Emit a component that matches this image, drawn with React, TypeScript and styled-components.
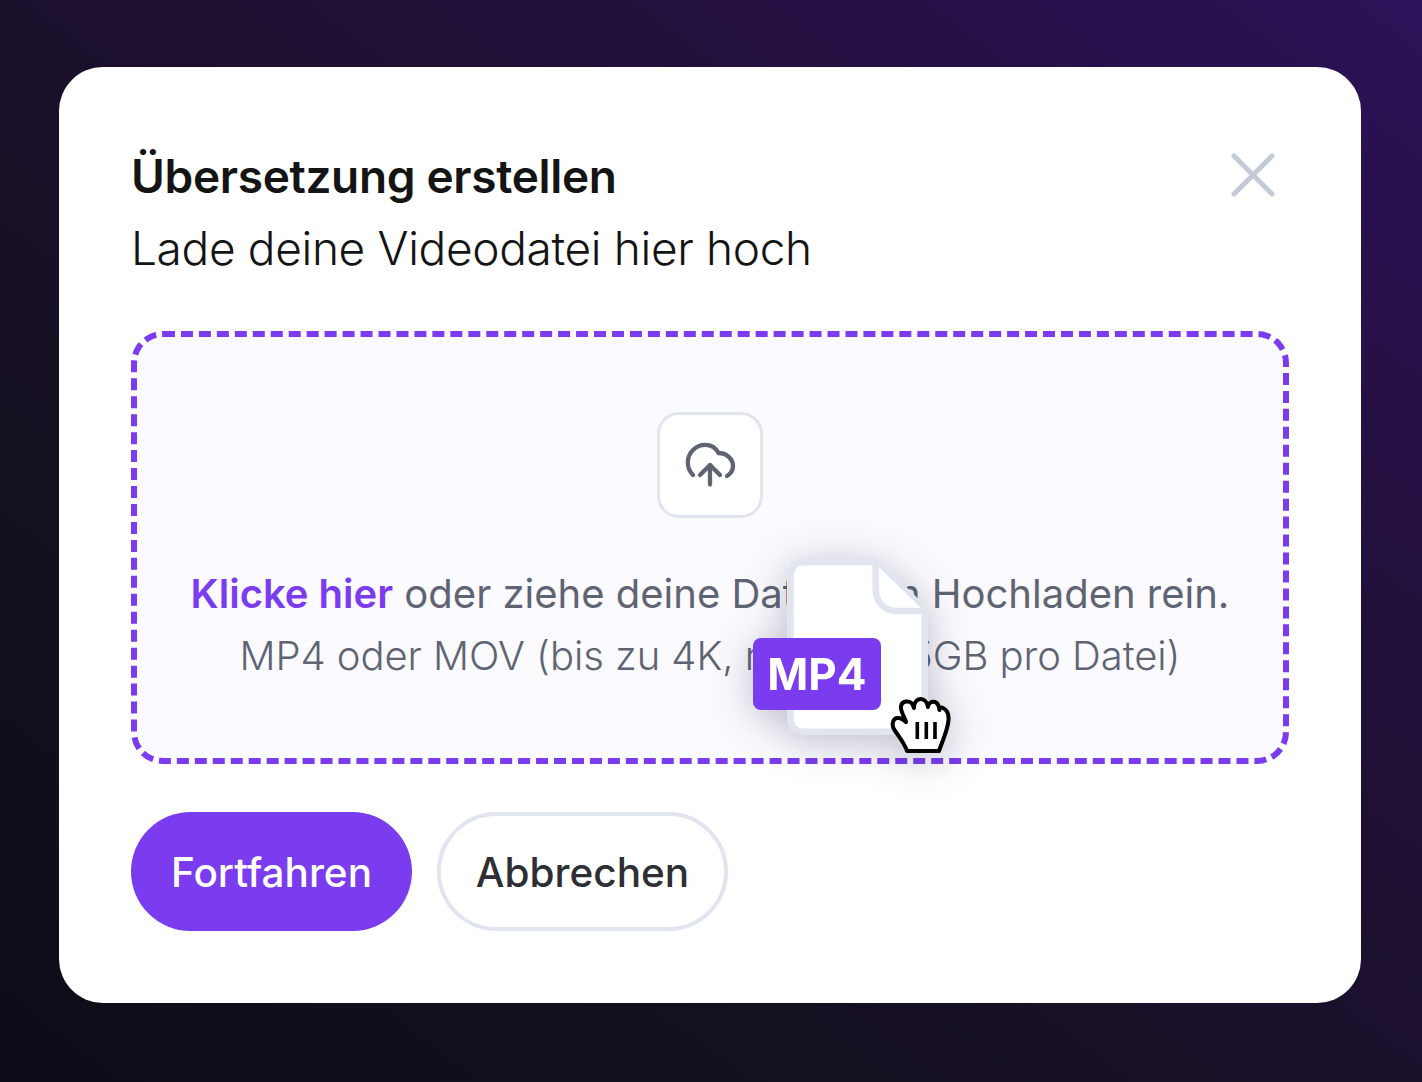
import styled, { createGlobalStyle } from "styled-components";

const GlobalStyle = createGlobalStyle`
  html, body {
    margin: 0;
    padding: 0;
  }
  * {
    box-sizing: border-box;
  }
`;

function App() {
  return (
    <>
      <GlobalStyle />
      <Page>
        <Modal>
          <Header>
            <div>
              <Title>Übersetzung erstellen</Title>
              <Subtitle>Lade deine Videodatei hier hoch</Subtitle>
            </div>
            <CloseButton aria-label="Schließen">
              <svg width="44" height="44" viewBox="0 0 44 44" fill="none" stroke="#c3cbd8" strokeWidth="5" strokeLinecap="round">
                <path d="M3 3 L41 41 M41 3 L3 41" />
              </svg>
            </CloseButton>
          </Header>

          <DropZone>
            <UploadTile>
              <svg width="60" height="60" viewBox="0 0 60 60" fill="none" stroke="#5f6472" strokeWidth="4.3" strokeLinecap="round" strokeLinejoin="round">
                <path d="M13 40 C9.5 36.5 7.8 32.5 7.8 27.5 C7.8 17.5 16 9.8 25 9.8 C31 9.8 36 13 38.5 18 C46.5 18 53 24 53 31 C53 35 51 38.5 47 41" />
                <path d="M30 49.6 V30 M20 40 L30 30 L40 40" />
              </svg>
            </UploadTile>
            <PrimaryLine>
              <Accent>Klicke hier</Accent> oder ziehe deine Datei zum Hochladen rein.
            </PrimaryLine>
            <SecondaryLine>MP4 oder MOV (bis zu 4K, maximal 5GB pro Datei)</SecondaryLine>

            <DraggedFile>
              <svg width="146" height="180" viewBox="0 0 146 180" fill="none">
                <path
                  d="M18 3.3 H86 C90 3.3 92.5 4.5 95 7.5 L135 47 C138 50 138.7 52 138.7 56 V158 C138.7 168 133 172.7 123 172.7 H18 C9 172.7 4.3 168 4.3 158 V18 C4.3 8 9 3.3 18 3.3 Z"
                  fill="#fff"
                  stroke="#e0e5ef"
                  strokeWidth="6.6"
                />
                <path d="M89.7 5 V28 C89.7 43 97 52 112 52 H138" fill="#fff" stroke="#e0e5ef" strokeWidth="6.6" strokeLinejoin="round" />
              </svg>
              <FileBadge>MP4</FileBadge>
              <GrabCursor>
                <svg width="70" height="64" viewBox="0 0 70 64" fill="#fff" stroke="#000" strokeWidth="4" strokeLinejoin="round" strokeLinecap="round">
                  <path d="M22 57 C20 50 15 44 9.5 36 C6 31 8 24.5 12 24 C15 23.5 18 25 21 28 C19 22 15 16 16 12 C17 7 24 6 27 9.5 L29 14 C29 7 33 5 36 5 C39 5 42 8 43 13 C43 9 47 7 50 8 C53 9 54 12 54.5 16 C54.5 14 56 13 58 14 C62 16 64 20 63.5 26 C62.5 37 58 45 54 57 Z" />
                  <path d="M32.3 28 V45 M41.3 28 V45 M50 28 V45" fill="none" strokeWidth="3.6" strokeLinecap="butt" />
                </svg>
              </GrabCursor>
            </DraggedFile>
          </DropZone>

          <Actions>
            <PrimaryButton>Fortfahren</PrimaryButton>
            <SecondaryButton>Abbrechen</SecondaryButton>
          </Actions>
        </Modal>
      </Page>
    </>
  );
}

export default App;

const Page = styled.div`
  width: 1422px;
  height: 1082px;
  overflow: hidden;
  padding: 67px 61px 79px 59px;
  background: linear-gradient(to top right, #0c0d18 0%, #14101f 30%, #201036 65%, #2c1259 100%);
  font-family: "Inter", "Liberation Sans", sans-serif;
`;

const Modal = styled.div`
  height: 936px;
  padding: 73px 72px 72px 72px;
  background: #fff;
  border-radius: 44px;
`;

const Header = styled.div`
  display: flex;
  justify-content: space-between;
  align-items: flex-start;
  padding-right: 14px;
`;

const Title = styled.h1`
  margin: 0;
  font-size: 46px;
  line-height: 72px;
  font-weight: 600;
  color: #141414;
  letter-spacing: -0.33px;
`;

const Subtitle = styled.p`
  margin: 0;
  font-size: 46px;
  line-height: 72px;
  font-weight: 300;
  color: #141414;
  letter-spacing: -0.34px;
`;

const CloseButton = styled.button`
  display: flex;
  padding: 0;
  margin: 13px 0 0;
  border: 0;
  background: none;
  cursor: pointer;
`;

const DropZone = styled.div`
  position: relative;
  height: 433px;
  margin-top: 47px;
  display: flex;
  flex-direction: column;
  align-items: center;
  background: #fbfaff;
  border: 6px dashed #7a3cee;
  border-radius: 32px;
`;

const UploadTile = styled.div`
  width: 106px;
  height: 106px;
  margin-top: 75px;
  display: flex;
  align-items: center;
  justify-content: center;
  background: #fff;
  border: 3px solid #e0e5ef;
  border-radius: 22px;
`;

const PrimaryLine = styled.p`
  margin: 45px 0 0;
  font-size: 40px;
  line-height: 62px;
  font-weight: 400;
  color: #5f6472;
  white-space: nowrap;
`;

const Accent = styled.span`
  font-weight: 600;
  color: #7a3cee;
`;

const SecondaryLine = styled.p`
  margin: 0;
  font-size: 40px;
  line-height: 62px;
  font-weight: 300;
  color: #5f6472;
  letter-spacing: -0.06px;
  white-space: nowrap;
`;

const DraggedFile = styled.div`
  position: absolute;
  left: 649px;
  top: 222px;
  width: 146px;
  height: 180px;
  filter: drop-shadow(0 6px 20px rgba(30, 30, 60, 0.28));

  svg {
    display: block;
  }
`;

const FileBadge = styled.div`
  position: absolute;
  left: -33px;
  top: 79px;
  width: 128px;
  height: 72px;
  display: flex;
  align-items: center;
  justify-content: center;
  background: #7a3cee;
  border-radius: 8px;
  color: #fff;
  font-size: 44px;
  font-weight: 700;
`;

const GrabCursor = styled.div`
  position: absolute;
  left: 99px;
  top: 135px;
`;

const Actions = styled.div`
  display: flex;
  gap: 25px;
  margin-top: 48px;
`;

const PrimaryButton = styled.button`
  height: 119px;
  width: 281px;
  padding-top: 2px;
  border: 0;
  border-radius: 60px;
  background: #7a3cee;
  color: #fff;
  font-family: inherit;
  font-size: 40.5px;
  font-weight: 500;
  cursor: pointer;
`;

const SecondaryButton = styled.button`
  height: 119px;
  width: 291px;
  padding-top: 2px;
  border: 4px solid #e0e5ef;
  border-radius: 60px;
  background: #fff;
  color: #2e2e33;
  font-family: inherit;
  font-size: 40.5px;
  font-weight: 500;
  cursor: pointer;
`;
